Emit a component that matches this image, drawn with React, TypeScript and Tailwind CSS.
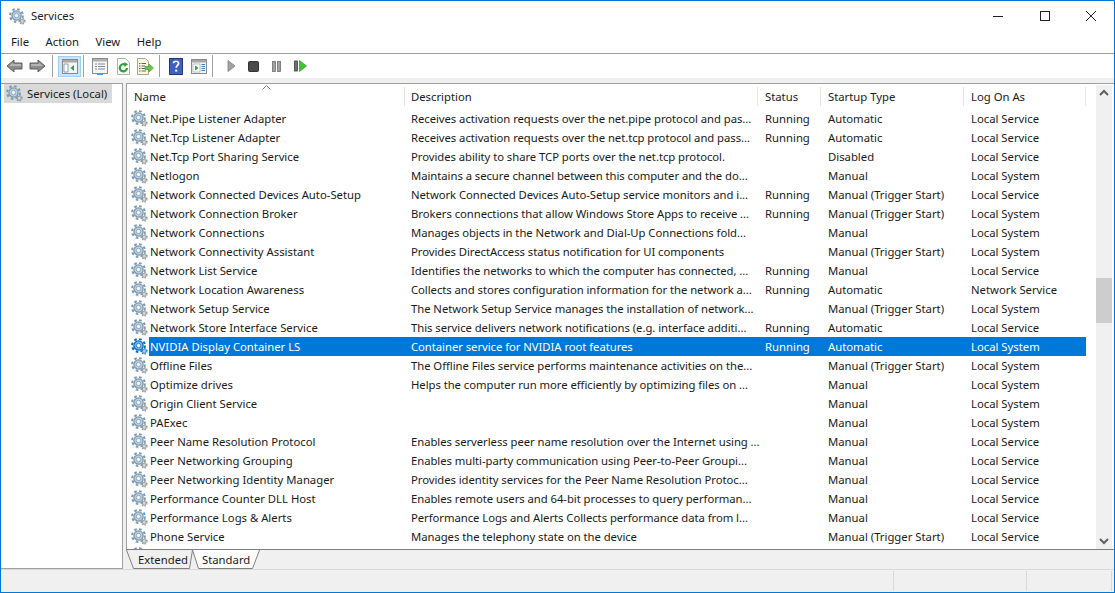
import React from "react";

const rows: string[][] = [
  ["Net.Pipe Listener Adapter", "Receives activation requests over the net.pipe protocol and pas...", "Running", "Automatic", "Local Service"],
  ["Net.Tcp Listener Adapter", "Receives activation requests over the net.tcp protocol and pass...", "Running", "Automatic", "Local Service"],
  ["Net.Tcp Port Sharing Service", "Provides ability to share TCP ports over the net.tcp protocol.", "", "Disabled", "Local Service"],
  ["Netlogon", "Maintains a secure channel between this computer and the do...", "", "Manual", "Local System"],
  ["Network Connected Devices Auto-Setup", "Network Connected Devices Auto-Setup service monitors and i...", "Running", "Manual (Trigger Start)", "Local Service"],
  ["Network Connection Broker", "Brokers connections that allow Windows Store Apps to receive ...", "Running", "Manual (Trigger Start)", "Local System"],
  ["Network Connections", "Manages objects in the Network and Dial-Up Connections fold...", "", "Manual", "Local System"],
  ["Network Connectivity Assistant", "Provides DirectAccess status notification for UI components", "", "Manual (Trigger Start)", "Local System"],
  ["Network List Service", "Identifies the networks to which the computer has connected, ...", "Running", "Manual", "Local Service"],
  ["Network Location Awareness", "Collects and stores configuration information for the network a...", "Running", "Automatic", "Network Service"],
  ["Network Setup Service", "The Network Setup Service manages the installation of network...", "", "Manual (Trigger Start)", "Local System"],
  ["Network Store Interface Service", "This service delivers network notifications (e.g. interface additi...", "Running", "Automatic", "Local Service"],
  ["NVIDIA Display Container LS", "Container service for NVIDIA root features", "Running", "Automatic", "Local System"],
  ["Offline Files", "The Offline Files service performs maintenance activities on the...", "", "Manual (Trigger Start)", "Local System"],
  ["Optimize drives", "Helps the computer run more efficiently by optimizing files on ...", "", "Manual", "Local System"],
  ["Origin Client Service", "", "", "Manual", "Local System"],
  ["PAExec", "", "", "Manual", "Local System"],
  ["Peer Name Resolution Protocol", "Enables serverless peer name resolution over the Internet using ...", "", "Manual", "Local Service"],
  ["Peer Networking Grouping", "Enables multi-party communication using Peer-to-Peer Groupi...", "", "Manual", "Local Service"],
  ["Peer Networking Identity Manager", "Provides identity services for the Peer Name Resolution Protoc...", "", "Manual", "Local Service"],
  ["Performance Counter DLL Host", "Enables remote users and 64-bit processes to query performan...", "", "Manual", "Local Service"],
  ["Performance Logs & Alerts", "Performance Logs and Alerts Collects performance data from l...", "", "Manual", "Local Service"],
  ["Phone Service", "Manages the telephony state on the device", "", "Manual (Trigger Start)", "Local Service"],
  // only the top of this row's icon shows above the tabs
  ["", "", "", "", ""],
];

function Gear({ selected = false }: { selected?: boolean }) {
  const main = selected ? "#0a6cc0" : "#7c9ab3";
  const ring = selected ? "#7db8ea" : "#bccfde";
  return (
    <svg width="17" height="17" viewBox="0 0 17 17" className="shrink-0">
      <circle cx="7.5" cy="7.5" r="6.4" fill="none" stroke={main} strokeWidth="2" strokeDasharray="2.6 2.4" />
      <circle cx="7.5" cy="7.5" r="4.6" fill={ring} stroke={main} strokeWidth="1.3" />
      <circle cx="7.5" cy="7.5" r="2.2" fill={selected ? "#fff" : "#f4f7fa"} stroke={main} strokeWidth="0.8" />
      <circle cx="13.2" cy="13.2" r="2.7" fill="none" stroke={selected ? "#1a78c8" : "#92979b"} strokeWidth="1.4" strokeDasharray="1.3 1.2" />
      <circle cx="13.2" cy="13.2" r="1.9" fill={selected ? "#a8d0f0" : "#d2d6da"} stroke={selected ? "#1a78c8" : "#84898d"} strokeWidth="0.7" />
    </svg>
  );
}

function Arrow({ flip = false }: { flip?: boolean }) {
  return (
    <svg width="17" height="14" viewBox="0 0 17 14" className={flip ? "-scale-x-100" : ""}>
      <path d="M1 7 L8 1 V4 H16 V10 H8 V13 Z" fill="#8c8c8c" stroke="#5f5f5f" strokeWidth="1" strokeLinejoin="round" />
      <path d="M3 7 L7 3.8 V5 H15 V7 Z" fill="#b4b4b4" />
    </svg>
  );
}

function Sep() {
  return <div className="h-[22px] w-px bg-[#a0a0a0]" />;
}

function WindowIcon({ children }: { children: React.ReactNode }) {
  return (
    <svg width="16" height="15" viewBox="0 0 16 15">
      <rect x="0.5" y="0.5" width="15" height="14" fill="#f4f4f4" stroke="#8a8a8a" />
      <rect x="1" y="1" width="14" height="2.5" fill="#a8a8a8" />
      {children}
    </svg>
  );
}

function Toolbar() {
  return (
    <div className="flex h-[25px] items-center border-b border-[#f0f0f0] bg-white">
      <div className="ml-[5px]"><Arrow /></div>
      <div className="ml-[6px]"><Arrow flip /></div>
      <div className="ml-[6px]"><Sep /></div>
      <div className="ml-[5px] flex h-[21px] w-[23px] items-center justify-center border border-[#9fd0f5] bg-[#cce4f7]">
        <WindowIcon>
          <path d="M2 5 H6 V13 H2 Z" fill="#fff" stroke="#6d8aa3" strokeWidth="0.8" />
          <path d="M12 6 L8.5 9 L12 12 Z" fill="#2f9e44" />
        </WindowIcon>
      </div>
      <div className="ml-[2px]"><Sep /></div>
      <div className="ml-[8px]">
        <svg width="16" height="17" viewBox="0 0 16 17">
          <rect x="0.5" y="0.5" width="15" height="15" fill="#f6f6f6" stroke="#8a8a8a" />
          <rect x="1" y="1" width="14" height="2.5" fill="#b0b0b0" />
          <path d="M3 6 H5 M6 6 H13 M3 8.5 H5 M6 8.5 H13 M3 11 H5 M6 11 H13" stroke="#7b8b9a" strokeWidth="1" />
          <rect x="5" y="15" width="6" height="2" fill="#35a7e7" />
        </svg>
      </div>
      <div className="ml-[8px]">
        <svg width="15" height="17" viewBox="0 0 15 17">
          <path d="M1.5 0.5 H9.5 L13.5 4.5 V16.5 H1.5 Z" fill="#fbfbf7" stroke="#b0b0b0" />
          <path d="M11 10 A3.6 3.6 0 1 1 9.6 6.9" fill="none" stroke="#2f9e44" strokeWidth="2.2" />
          <path d="M8.5 4 L12 6.5 L8.5 9 Z" fill="#2f9e44" />
        </svg>
      </div>
      <div className="ml-[5px]">
        <svg width="18" height="17" viewBox="0 0 18 17">
          <path d="M1.5 0.5 H9.5 L12.5 3.5 V16.5 H1.5 Z" fill="#fbf6dc" stroke="#a8a48e" />
          <path d="M3 5.5 H4.5 M5.5 5.5 H10 M3 8 H4.5 M5.5 8 H9 M3 10.5 H4.5 M5.5 10.5 H9 M3 13 H4.5 M5.5 13 H10" stroke="#5c6670" strokeWidth="1" />
          <path d="M9 8.5 H13 V6 L17.5 10 L13 14 V11.5 H9 Z" fill="#6cc24a" stroke="#3f9a2d" strokeWidth="0.6" />
        </svg>
      </div>
      <div className="ml-[5px]"><Sep /></div>
      <div className="ml-[9px]">
        <svg width="14" height="17" viewBox="0 0 14 17">
          <rect x="0" y="0" width="14" height="17" fill="#3f5fc0" />
          <rect x="0.5" y="0.5" width="13" height="16" fill="none" stroke="#26357f" />
          <path d="M4.5 5.2 C4.5 2.6 9.8 2.6 9.6 5.4 C9.5 7.3 7.2 7.4 7.2 9.8" fill="none" stroke="#fff" strokeWidth="1.7" />
          <rect x="6.2" y="11.6" width="2" height="2" fill="#fff" />
        </svg>
      </div>
      <div className="ml-[8px]">
        <WindowIcon>
          <path d="M2 5 H9 V13 H2 Z" fill="#fff" stroke="#8a9aa8" strokeWidth="0.6" />
          <path d="M4 6.5 L7.5 9 L4 11.5 Z" fill="#2f9e44" />
          <path d="M10.5 5.5 H14 M10.5 7.5 H14 M10.5 9.5 H14 M10.5 11.5 H14" stroke="#4f7fb0" strokeWidth="1" />
        </WindowIcon>
      </div>
      <div className="ml-[5px]"><Sep /></div>
      <div className="ml-[14px]">
        <svg width="9" height="12" viewBox="0 0 9 12"><path d="M1 0.5 L8 6 L1 11.5 Z" fill="#a3a3a3" stroke="#808080" strokeWidth="0.8" /></svg>
      </div>
      <div className="ml-[12px]">
        <svg width="11" height="11" viewBox="0 0 11 11"><rect x="0.5" y="0.5" width="10" height="10" rx="1" fill="#4a4a4a" stroke="#333" /></svg>
      </div>
      <div className="ml-[13px]">
        <svg width="9" height="11" viewBox="0 0 9 11">
          <rect x="0.5" y="0.5" width="3" height="10" fill="#a0a0a0" stroke="#6f6f6f" strokeWidth="0.8" />
          <rect x="5.5" y="0.5" width="3" height="10" fill="#a0a0a0" stroke="#6f6f6f" strokeWidth="0.8" />
        </svg>
      </div>
      <div className="ml-[13px]">
        <svg width="13" height="12" viewBox="0 0 13 12">
          <rect x="0.5" y="1" width="3" height="10" fill="#707070" stroke="#404040" strokeWidth="0.8" />
          <path d="M5.5 0.5 L12.5 6 L5.5 11.5 Z" fill="#3fc32f" stroke="#2a9a20" strokeWidth="0.7" />
        </svg>
      </div>
    </div>
  );
}

function Head({ w, children }: { w: string; children: React.ReactNode }) {
  return (
    <div className={`${w} flex h-[19px] items-center border-r border-[#e5e5e5] shrink-0`}>{children}</div>
  );
}

export default function App() {
  return (
    <div className="flex h-[593px] w-[1115px] flex-col overflow-hidden border border-[#0078d7] bg-[#f0f0f0] font-['Noto_Sans',sans-serif] text-[11.3px] leading-none text-[#1a1a1a]">
      <div className="flex h-[30px] items-center bg-white pl-[8px]">
        <Gear />
        <span className="ml-[5px]">Services</span>
        <div className="ml-auto flex items-center">
          <svg width="12" height="12" viewBox="0 0 12 12" className="mr-[35px]"><path d="M1 6.5 H11" stroke="#222" strokeWidth="1" /></svg>
          <svg width="12" height="12" viewBox="0 0 12 12" className="mr-[34px]"><rect x="1.5" y="1.5" width="9" height="9" fill="none" stroke="#222" /></svg>
          <svg width="12" height="12" viewBox="0 0 12 12" className="mr-[17px]"><path d="M1 1 L11 11 M11 1 L1 11" stroke="#222" strokeWidth="1" /></svg>
        </div>
      </div>
      <div className="flex h-[23px] items-center gap-[16.5px] border-b border-[#a0a0a0] bg-white pl-[10px] pb-[1px]">
        <span>File</span>
        <span>Action</span>
        <span>View</span>
        <span>Help</span>
      </div>
      <Toolbar />
      <div className="flex min-h-0 flex-1 pt-[4px]">
        <div className="h-[486px] w-[122px] shrink-0 border-r border-t border-b border-[#a0a0a0] bg-white pl-[3px]">
          <div className="flex h-[19px] w-[108px] items-center whitespace-nowrap bg-[#d9d9d9] pl-[2px]">
            <Gear />
            <span className="ml-[4px]">Services (Local)</span>
          </div>
        </div>
        <div className="ml-[3px] flex w-[988px] flex-col">
          <div className="relative h-[467px] overflow-hidden border-l border-t border-b border-l-[#a0a0a0] border-t-[#a0a0a0] border-b-[#808080] bg-white">
            <div className="flex h-[25px] items-center pr-[2px]">
              <Head w="w-[278px] pl-[7px]">Name</Head>
              <Head w="w-[353px] pl-[6px]">Description</Head>
              <Head w="w-[63px] pl-[7px]">Status</Head>
              <Head w="w-[143px] pl-[7px]">Startup Type</Head>
              <Head w="w-[122px] pl-[7px]">Log On As</Head>
            </div>
            <svg width="9" height="5" viewBox="0 0 9 5" className="absolute left-[135px] top-[1px]"><path d="M0.5 4.5 L4.5 0.5 L8.5 4.5" fill="none" stroke="#777" /></svg>
            <div>
              {rows.map((r, i) => (
                <div key={i} className="flex h-[19px] w-[959px] items-center">
                  <div className="flex w-[278px] shrink-0 items-center pl-[4px]">
                    <Gear selected={i === 12} />
                    <span className={`ml-[1px] flex h-[19px] items-center pl-[1px] ${i === 12 ? "text-white bg-[#0078d7] w-[257px]" : ""}`}>{r[0]}</span>
                  </div>
                  <div className={`flex h-[19px] flex-1 items-center ${i === 12 ? "bg-[#0078d7] text-white" : ""}`}>
                    <div className="w-[353px] shrink-0 whitespace-nowrap pl-[6px] tracking-[-0.05px]">{r[1]}</div>
                    <div className="w-[63px] shrink-0 pl-[7px]">{r[2]}</div>
                    <div className="w-[143px] shrink-0 pl-[7px]">{r[3]}</div>
                    <div className="w-[122px] shrink-0 pl-[7px]">{r[4]}</div>
                  </div>
                </div>
              ))}
            </div>
            <div className="absolute right-[2px] top-[1px] flex h-[464px] w-[16px] flex-col items-center justify-between bg-[#f0f0f0]">
              <svg width="16" height="17" viewBox="0 0 16 17"><path d="M4 10 L8 6 L12 10" fill="none" stroke="#606060" strokeWidth="2" /></svg>
              <div className="absolute top-[193px] h-[45px] w-[16px] bg-[#cdcdcd]" />
              <svg width="16" height="17" viewBox="0 0 16 17"><path d="M4 7 L8 11 L12 7" fill="none" stroke="#606060" strokeWidth="2" /></svg>
            </div>
          </div>
          <div className="relative h-[19px] w-[140px]">
            <svg width="140" height="19" viewBox="0 0 140 19" className="absolute left-0 top-0">
              <path d="M0.5 0 L7.5 18.5 H63.5 L66.5 0" fill="#f0f0f0" stroke="#808080" />
              <path d="M66.5 0 L72.5 18.5 H126.5 L133.5 0" fill="#fff" stroke="#808080" />
            </svg>
            <span className="absolute left-[12px] top-[4px]">Extended</span>
            <span className="absolute left-[76px] top-[4px]">Standard</span>
          </div>
        </div>
      </div>
      <div className="flex h-[23px] justify-end border-t border-[#d9d9d9] bg-[#f0f0f0]">
        <div className="mt-[1px] h-[20px] w-[133px] border-l border-[#d9d9d9]" />
        <div className="mt-[1px] h-[20px] w-[85px] border-l border-[#d9d9d9]" />
        <div className="mt-[1px] h-[20px] w-[3px] border-l border-[#d9d9d9]" />
      </div>
    </div>
  );
}
